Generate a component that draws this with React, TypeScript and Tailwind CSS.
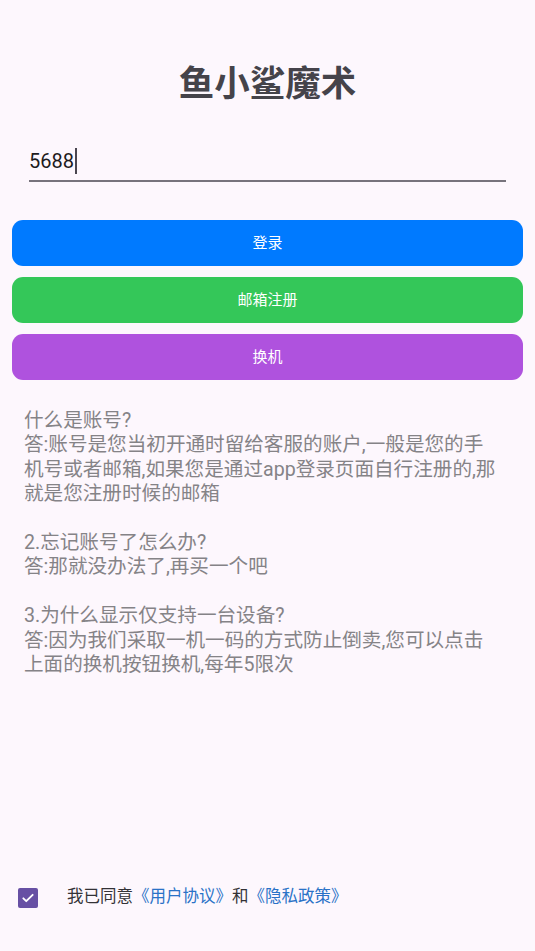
const faq = [
  "什么是账号?",
  "答:账号是您当初开通时留给客服的账户,一般是您的手机号或者邮箱,如果您是通过app登录页面自行注册的,那就是您注册时候的邮箱",
  "",
  "2.忘记账号了怎么办?",
  "答:那就没办法了,再买一个吧",
  "",
  "3.为什么显示仅支持一台设备?",
  "答:因为我们采取一机一码的方式防止倒卖,您可以点击上面的换机按钮换机,每年5限次",
];

const App = () => {
  return (
    <div
      className="min-h-screen h-[951px] w-full flex flex-col bg-[#fdf7fd]"
      style={{ fontFamily: "Roboto, 'Noto Sans CJK SC', sans-serif" }}
    >
      <h1 className="pt-[62px] text-center text-[35.5px] leading-[44px] font-bold text-[#45434a]">
        鱼小鲨魔术
      </h1>

      {/* account input */}
      <div className="mx-[29px] mt-[41px] border-b-2 border-[#77737c] pb-[5px]">
        <div className="h-[28px] flex items-center text-[20px] text-[#1d1b20]">
          <span>5688</span>
          <span className="ml-[1px] inline-block w-[2px] h-[26px] bg-[#4a4650]"></span>
        </div>
      </div>

      <div className="mt-[38px] px-[12px] flex flex-col gap-[11px]">
        <button className="h-[46px] rounded-[11px] bg-[#007aff] text-white text-[15px]">登录</button>
        <button className="h-[46px] rounded-[11px] bg-[#34c759] text-white text-[15px]">邮箱注册</button>
        <button className="h-[46px] rounded-[11px] bg-[#af52de] text-white text-[15px]">换机</button>
      </div>

      <div className="mt-[29px] pl-[24px] pr-[33px] text-[19.6px] leading-[24.4px] text-[#858387]">
        {faq.map((line, i) =>
          line ? <p key={i}>{line}</p> : <p key={i} className="h-[24.4px]"></p>
        )}
      </div>

      <div className="mt-auto mb-[41px] flex items-center">
        <div className="ml-[18px] w-[20px] h-[20px] rounded-[2px] bg-[#6750a4] flex items-center justify-center">
          <svg width="14" height="14" viewBox="0 0 24 24" fill="none">
            <path d="M4 12.5l5 5L20 6.5" stroke="white" strokeWidth="3.2" strokeLinecap="round" strokeLinejoin="round" />
          </svg>
        </div>
        <p className="ml-[29px] text-[16.5px] text-[#333236]">
          我已同意<span className="text-[#2a72c7]">《用户协议》</span>和<span className="text-[#2a72c7]">《隐私政策》</span>
        </p>
      </div>
    </div>
  );
};

export default App;
